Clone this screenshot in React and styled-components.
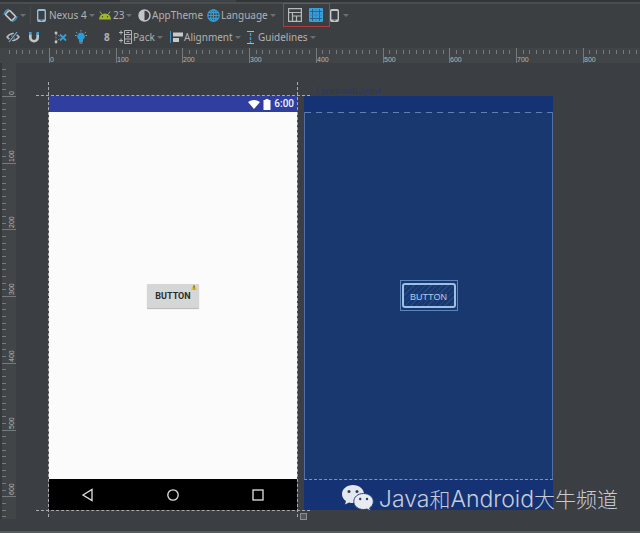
import React from 'react'
import styled, { createGlobalStyle } from 'styled-components'

const GlobalStyle = createGlobalStyle`
* {
  box-sizing: border-box;
}
body {
  margin: 0;
  background: #3b3e42;
  font-family: "Noto Sans", "Open Sans", sans-serif;
}
svg {
  display: block;
  flex: none;
}
`

const Page = styled.div`
display: flex;
flex-direction: column;
min-height: 100vh;
overflow: hidden;
background: #3b3e42;
border-bottom: 2px solid #555a5c;

`

const TabEdge = styled.div`
height: 4px;
background: linear-gradient(90deg, #323537 0 120px, #3f4244 120px 236px, #323537 236px);
border-bottom: 2px solid #4b4e50;

`

const Toolbar = styled.div`
display: flex;
align-items: center;
height: ${props => props.$height}px;
padding-top: 1px;
padding-left: ${props => props.$start}px;
background: #3c3f41;

`

const Tool = styled.button`
display: flex;
align-items: center;
flex: none;
gap: 1px;
width: ${props => props.$width}px;
height: 20px;
padding: 0;
border: none;
background: none;
color: #b0b2b4;
font-family: inherit;
font-size: 10px;
line-height: 14px;
white-space: nowrap;

svg {
  margin-right: ${props => props.$space || 0}px;
}

`

const Caret = styled.span`
margin-left: 1px;
border: 3px solid transparent;
border-top: 3px solid #6c6f72;
border-bottom: none;

`

const Divider = styled.div`
width: 1px;
height: 18px;
margin-right: 6px;
background: #484b4d;

`

const ModeGroup = styled.div`
display: flex;
align-items: center;
position: relative;
z-index: 1;
height: 24px;
width: 47px;
padding-left: 4px;
border: 1px solid #b03c40;

`

const Workspace = styled.div`
display: grid;
grid-template-columns: 16px 1fr;
grid-template-rows: 15px 1fr;
flex: 1;

`

const TopRuler = styled.div`
grid-column: 1 / 3;
overflow: hidden;
background: #424547;

`

const SideRuler = styled.div`
margin-bottom: 12px;
overflow: hidden;
background: #424547;
border-left: 2px solid #35383a;

`

const RulerText = styled.text`
fill: #b3b5b6;
font-family: "Liberation Sans", sans-serif;
font-size: 7px;

`

const Stage = styled.div`
display: flex;
align-items: flex-start;
gap: 7px;
position: relative;
padding: 33px 0 21px 33px;

`

const Device = styled.div`
display: flex;
flex-direction: column;
position: relative;
width: 248px;
height: 414px;
background: #fbfbfb;

`

const GuideLines = styled.div`
position: absolute;
pointer-events: none;
${props => props.$across ? `
inset: -1px -13px;
border-top: 1px dashed #a9abac;
border-bottom: 1px dashed #a9abac;
` : `
inset: -14px -1px -7px;
border-left: 1px dashed #a9abac;
border-right: 1px dashed #a9abac;
`}

`

const Grip = styled.div`
position: absolute;
right: -10px;
bottom: -10px;
width: 7px;
height: 7px;
border: 1px solid #8d9092;
background: #55585b;

`

const StatusBar = styled.div`
display: flex;
align-items: center;
justify-content: flex-end;
gap: 3px;
height: 16px;
padding-right: 3px;
background: #303f9f;
color: #f4f5fb;
font-family: Roboto, sans-serif;
font-size: 10px;
font-weight: 500;
line-height: 16px;

`

const Screen = styled.div`
display: flex;
align-items: center;
justify-content: center;
flex: 1;

`

const NavBar = styled.div`
display: flex;
align-items: center;
justify-content: space-between;
height: 31px;
padding: 0 32px;
background: #000;

`

const AppButton = styled.button`
position: relative;
width: 52px;
height: 24px;
padding: 0;
border: none;
border-radius: 1px;
background: #d5d6d6;
box-shadow: 0 1px 1px #b5b5b5;
color: #2c2c2c;
font-family: Roboto, sans-serif;
font-size: 9px;
font-weight: 700;

`

const Warning = styled.svg`
position: absolute;
top: 0;
right: 2px;

`

const Blueprint = styled.div`
display: flex;
flex-direction: column;
position: relative;
width: 249px;
height: 414px;
background: #153374;

`

const BlueprintName = styled.span`
position: absolute;
top: -11px;
left: 12px;
color: #26396f;
font-size: 8px;
line-height: 11px;

`

const BlueprintBar = styled.div`
height: ${props => props.$height}px;

`

const BlueprintScreen = styled.div`
display: flex;
align-items: center;
justify-content: center;
flex: 1;
border: 1px solid #4f70a3;
border-top: none;
border-bottom: 1px dashed #7896c0;
background: repeating-linear-gradient(90deg, #5f80b2 0 6px, #193870 6px 11px) top / 100% 1px no-repeat #193870;

`

const Selection = styled.div`
padding: 2px 1px;
border: 1px solid #5c86bd;

`

const BlueprintButton = styled.button`
display: block;
width: 54px;
height: 25px;
padding: 3px 0 0;
border: 2px solid #9dbfe6;
border-radius: 3px;
background: repeating-linear-gradient(135deg, #193870 0 3px, #244a85 3px 4px);
color: #b3cbe8;
font-family: "Liberation Sans", sans-serif;
font-size: 9px;

`

const Watermark = styled.div`
display: flex;
align-items: center;
gap: 5px;
position: absolute;
right: 22px;
bottom: 17px;
color: #c6ccd6;
font-family: "Noto Sans CJK SC", sans-serif;
font-size: 21px;
font-weight: 300;
line-height: 30px;
white-space: nowrap;

`

const Latin = styled.span`
font-family: Inter, sans-serif;
font-size: 23px;

`

const RotateIcon = () => (
  <svg width="15" height="15" viewBox="0 0 15 15" fill="none">
    <rect x="4.5" y="3" width="6" height="9" rx="1" transform="rotate(-45 7.5 7.5)" stroke="#c3c6c8" strokeWidth="1.5" />
    <path d="M1 7a6.500 6.500 0 0 1 5-5.500M14 8a6.500 6.500 0 0 1-5 5.500" stroke="#4a93bd" strokeWidth="1.300" />
  </svg>
)

const PhoneIcon = ({ color, home }) => (
  <svg width="9" height="13" viewBox="0 0 9 13">
    <rect x=".7" y=".7" width="7.600" height="11.600" rx="1.200" fill="none" stroke={color} strokeWidth="1.400" />
    <path d="M1 10.500h7v2H1z" fill={color} />
    <path d="M1 1.500h7" stroke={color} />
    <path d="M3.500 11.200h2" stroke={home} />
  </svg>
)

const AndroidIcon = () => (
  <svg width="14" height="9" viewBox="0 0 14 9">
    <path d="M1 8.500a6 6 0 0 1 12 0z" fill="#9fb72a" />
    <path d="M2 .5l2 3M12 .5l-2 3" stroke="#9fb72a" />
    <circle cx="4.500" cy="5.800" r=".7" fill="#3c3f41" />
    <circle cx="9.500" cy="5.800" r=".7" fill="#3c3f41" />
  </svg>
)

const ThemeIcon = () => (
  <svg width="13" height="13" viewBox="0 0 13 13">
    <circle cx="6.500" cy="6.500" r="5.500" fill="none" stroke="#c3c6c8" strokeWidth="1.400" />
    <path d="M6.500 1a5.500 5.500 0 0 0 0 11z" fill="#c3c6c8" />
  </svg>
)

const GlobeIcon = () => (
  <svg width="13" height="13" viewBox="0 0 13 13" fill="none" stroke="#3b9bd1" strokeWidth="1.200">
    <circle cx="6.500" cy="6.500" r="5.700" />
    <ellipse cx="6.500" cy="6.500" rx="2.700" ry="5.700" />
    <path d="M6.500 1v11M1 6.500h11M1.800 3.700h9.400M1.800 9.300h9.400" />
  </svg>
)

const DesignIcon = () => (
  <svg width="14" height="14" viewBox="0 0 14 14" fill="none" stroke="#b7babb" strokeWidth="1.200">
    <path d="M.6.6h12.800v12.800H.6zM.6 4.500h12.800M4.500 4.500v9M4.500 8h9M8.500 8v5.500" />
  </svg>
)

const BlueprintIcon = () => (
  <svg width="14" height="14" viewBox="0 0 14 14">
    <rect width="14" height="14" rx="1" fill="#3aa0dc" />
    <path d="M3.500 1v12M10.500 1v12M1 3.500h12M1 10.500h12" stroke="#23648f" />
    <path d="M7 1v12M1 7h12" stroke="#2f86bb" />
  </svg>
)

const EyeIcon = () => (
  <svg width="14" height="12" viewBox="0 0 14 12" fill="none">
    <path d="M1 6q6-7 12 0q-6 7-12 0z" stroke="#b9bcbe" strokeWidth="1.400" />
    <circle cx="7" cy="6" r="2" fill="#b9bcbe" />
    <path d="M3 11L11 1" stroke="#3c3f41" strokeWidth="3" />
    <path d="M3 11L11 1" stroke="#6fb4dc" strokeWidth="1.200" />
  </svg>
)

const MagnetIcon = () => (
  <svg width="12" height="12" viewBox="0 0 12 12" fill="none" strokeWidth="2.600">
    <path d="M2.300 3v3.500a3.700 3.700 0 0 0 7.400 0V3" stroke="#c3c6c8" />
    <path d="M2.300 1v3M9.700 1v3" stroke="#4a9fd0" />
  </svg>
)

const ClearIcon = () => (
  <svg width="13" height="13" viewBox="0 0 13 13" fill="none">
    <path d="M2 2.500v8M2 2l4 4M2 11l4-4" stroke="#80868a" strokeDasharray="2 1" />
    <circle cx="2" cy="2" r="1.400" fill="#c3c6c8" />
    <circle cx="2" cy="11" r="1.400" fill="#c3c6c8" />
    <path d="M6 3.500l6 6M12 3.500l-6 6" stroke="#3b9bd1" strokeWidth="1.800" />
  </svg>
)

const BulbIcon = () => (
  <svg width="12" height="14" viewBox="0 0 12 14">
    <path d="M6 2.500a3.800 3.800 0 0 1 2 7V12H4V9.500a3.800 3.800 0 0 1 2-7z" fill="#279ddb" />
    <path d="M4.500 13h3" stroke="#8fa3ae" />
    <path d="M6 0v1.500M1 2l1.300 1M11 2L9.700 3M0 5.500h1.500M10.500 5.500H12" stroke="#8a9aa3" />
  </svg>
)

const PackIcon = () => (
  <svg width="13" height="14" viewBox="0 0 13 14" fill="none" stroke="#b1b4b6">
    <path d="M5.500.5h7v13h-7zM5.500 4.500h7M5.500 9h7M7.500 2.500h3M7.500 6.800h3M7.500 11.300h3" />
    <path d="M0 2.500h4M2 .5v4M0 10.500h4M2 8.500v4" />
  </svg>
)

const AlignIcon = () => (
  <svg width="13" height="12" viewBox="0 0 13 12">
    <path d="M.5 0v12" stroke="#3b8fc0" />
    <path d="M3 1.500h10v4H3zM3 7h6v4H3z" fill="#c7cacc" />
  </svg>
)

const GuideIcon = () => (
  <svg width="7" height="13" viewBox="0 0 7 13">
    <path d="M0 .5h7M0 12.500h7" stroke="#b1b4b6" />
    <path d="M3.500 2v10" stroke="#3b9bd1" strokeWidth="1.400" strokeDasharray="3 1" />
  </svg>
)

const ChatIcon = () => (
  <svg width="32" height="27" viewBox="0 0 32 27">
    <path d="M11 0C4.700 0 0 4 0 9c0 3 1.500 5.400 4 7l-1 3.500 4-2c1.300.4 2.700.5 4 .5 6.200 0 11-4 11-9S17.200 0 11 0z" fill="#e3e7ef" />
    <path d="M21.500 8.500c-5.600 0-9.700 3.500-9.700 8s4.100 8 9.700 8c1.200 0 2.400-.2 3.500-.5l3.600 2-1-3.100c2.300-1.500 3.700-3.700 3.700-6.400 0-4.500-4.200-8-9.800-8z" fill="#e8ebf1" stroke="#2b4477" strokeWidth="1" />
    <g fill="#303c57">
      <circle cx="7" cy="6.500" r="1.500" />
      <circle cx="15" cy="6.500" r="1.500" />
      <circle cx="18.200" cy="14" r="1.200" />
      <circle cx="25" cy="14" r="1.200" />
    </g>
  </svg>
)

// 100 dp on the rulers at the current zoom
const STEP = 66.7

const range = (from, to) => {
  const list = []
  for (let i = from; i <= to; i++) list.push(i)
  return list
}

const HorizontalRuler = () => (
  <svg width="100%" height="15">
    {range(-6, 300).map(i => (
      <path key={i} d={`M${Math.round(49 + i * STEP / 10) + 0.5} ${i % 10 ? 2 : 0}V${i % 10 ? 6 : 15}`} stroke="#777a7c" />
    ))}
    {range(0, 8).map(n => (
      <RulerText key={n} x={Math.round(50 + n * STEP)} y="14">{n * 100}</RulerText>
    ))}
  </svg>
)

const VerticalRuler = () => (
  <svg width="14" height="456">
    {range(-4, 63).map(i => (
      <path key={i} d={`M0 ${Math.round(33 + i * STEP / 10) + 0.5}H${i % 10 ? 4 : 14}`} stroke="#777a7c" />
    ))}
    {range(0, 6).map(n => (
      <RulerText key={n} transform={`translate(12 ${Math.round(32 + n * STEP)}) rotate(-90)`}>{n * 100}</RulerText>
    ))}
  </svg>
)

const App = () => {
  return (
    <Page>
      <GlobalStyle />
      <TabEdge />

      <Toolbar $height={21} $start={3}>
        <Tool $width={27} aria-label="Orientation"><RotateIcon /><Caret /></Tool>
        <Divider />
        <Tool $width={61} $space={2}><PhoneIcon color="#8fc0de" home="#3c3f41" />Nexus 4<Caret /></Tool>
        <Tool $width={40}><AndroidIcon />23<Caret /></Tool>
        <Tool $width={69}><ThemeIcon />AppTheme</Tool>
        <Tool $width={76}><GlobeIcon />Language<Caret /></Tool>
        <ModeGroup>
          <Tool $width={21} aria-label="Design"><DesignIcon /></Tool>
          <Tool $width={20} aria-label="Blueprint"><BlueprintIcon /></Tool>
        </ModeGroup>
        <Tool $width={24} $space={2} aria-label="Device size"><PhoneIcon color="#c3c6c8" home="#3c3f41" /><Caret /></Tool>
      </Toolbar>

      <Toolbar $height={23} $start={6}>
        <Tool $width={22} aria-label="Hide constraints"><EyeIcon /></Tool>
        <Tool $width={26} aria-label="Autoconnect"><MagnetIcon /></Tool>
        <Tool $width={21} aria-label="Clear constraints"><ClearIcon /></Tool>
        <Tool $width={29} aria-label="Infer constraints"><BulbIcon /></Tool>
        <Tool $width={15} aria-label="Default margin"><b>8</b></Tool>
        <Tool $width={51}><PackIcon />Pack<Caret /></Tool>
        <Tool $width={77}><AlignIcon />Alignment<Caret /></Tool>
        <Tool $width={80} $space={3}><GuideIcon />Guidelines<Caret /></Tool>
      </Toolbar>

      <Workspace>
        <TopRuler><HorizontalRuler /></TopRuler>
        <SideRuler><VerticalRuler /></SideRuler>

        <Stage>
          <Device>
            <StatusBar>
              <svg width="12" height="9" viewBox="0 0 12 9">
                <path d="M0 2q6-4 12 0L6 9z" fill="#fff" />
              </svg>
              <svg width="8" height="11" viewBox="0 0 8 11">
                <path d="M2.500 0h3v1H7.500v10h-7V1h2z" fill="#fff" />
              </svg>
              6:00
            </StatusBar>
            <Screen>
              <AppButton>
                BUTTON
                <Warning width="6" height="6" viewBox="0 0 6 6">
                  <path d="M3 0l3 6H0z" fill="#e3c62c" />
                  <path d="M3 1.500v2.300M3 4.500v1" stroke="#55490f" />
                </Warning>
              </AppButton>
            </Screen>
            <NavBar>
              <svg width="14" height="14" viewBox="0 0 14 14">
                <path d="M2 7l9-5.500v11z" fill="none" stroke="#e2e2e2" strokeWidth="1.300" />
              </svg>
              <svg width="14" height="14" viewBox="0 0 14 14">
                <circle cx="7" cy="7" r="5.200" fill="none" stroke="#e2e2e2" strokeWidth="1.300" />
              </svg>
              <svg width="14" height="14" viewBox="0 0 14 14">
                <rect x="2" y="2" width="10" height="10" fill="none" stroke="#e2e2e2" strokeWidth="1.300" />
              </svg>
            </NavBar>
            <GuideLines $across />
            <GuideLines />
            <Grip />
          </Device>

          <Blueprint>
            <BlueprintName>ConstraintLayout</BlueprintName>
            <BlueprintBar $height={16} />
            <BlueprintScreen>
              <Selection>
                <BlueprintButton>BUTTON</BlueprintButton>
              </Selection>
            </BlueprintScreen>
            <BlueprintBar $height={30} />
          </Blueprint>

          <Watermark>
            <ChatIcon />
            <span><Latin>Java</Latin>和<Latin>Android</Latin>大牛频道</span>
          </Watermark>
        </Stage>
      </Workspace>
    </Page>
  )
}

export default App
